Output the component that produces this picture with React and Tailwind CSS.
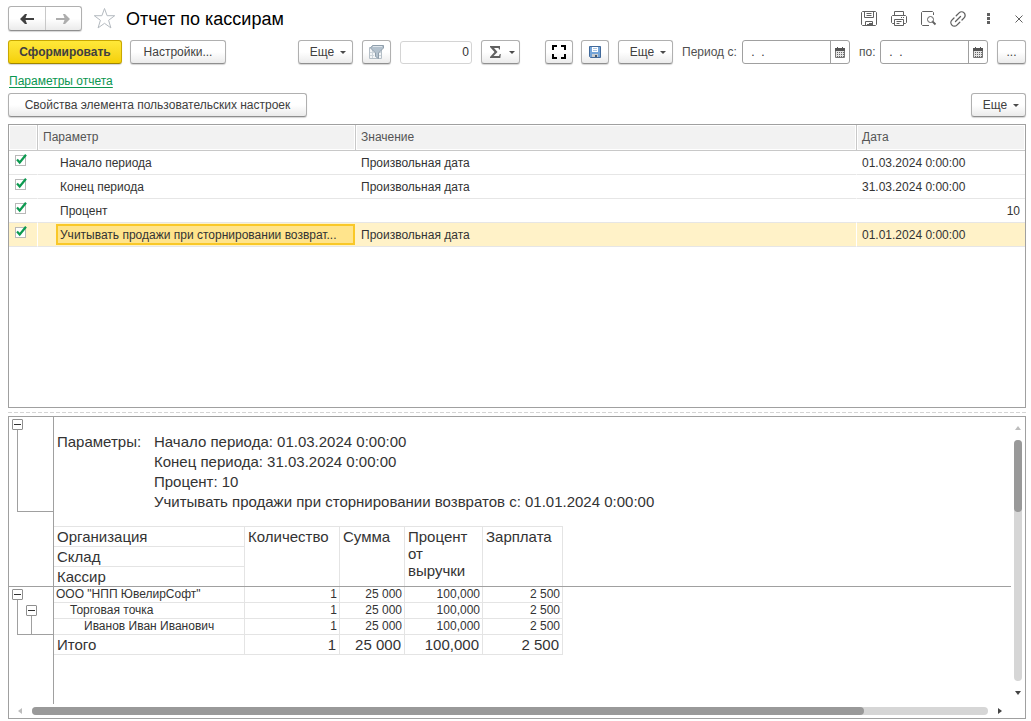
// src/App.jsx
import React from "react";

const parametros = [
  { nombre: "Начало периода", valor: "Произвольная дата", fecha: "01.03.2024 0:00:00" },
  { nombre: "Конец периода", valor: "Произвольная дата", fecha: "31.03.2024 0:00:00" },
  { nombre: "Процент", valor: "", fecha: "10", numero: true },
  {
    nombre: "Учитывать продажи при сторнировании возврат...",
    valor: "Произвольная дата",
    fecha: "01.01.2024 0:00:00",
    activo: true,
  },
];

const resumen = [
  "Начало периода: 01.03.2024 0:00:00",
  "Конец периода: 31.03.2024 0:00:00",
  "Процент: 10",
  "Учитывать продажи при сторнировании возвратов с: 01.01.2024 0:00:00",
];

const filas = [
  { nombre: 'ООО "НПП ЮвелирСофт"', sangria: "pl-[2px]" },
  { nombre: "Торговая точка", sangria: "pl-4" },
  { nombre: "Иванов Иван Иванович", sangria: "pl-[30px]" },
];

const cifras = ["1", "25 000", "100,000", "2 500"];

function Boton({ className = "", children, ...props }) {
  return (
    <button
      type="button"
      className={`flex h-6 shrink-0 items-center justify-center rounded-[3px] border border-[#b0b0b0] border-b-[#8f8f8f] bg-linear-to-b from-white from-50% to-[#ebebeb] whitespace-nowrap text-[#404040] shadow-[0_1px_1px_#d5d5d5] ${className}`}
      {...props}
    >
      {children}
    </button>
  );
}

function Flecha() {
  return (
    <svg width="6" height="3" viewBox="0 0 6 3" className="fill-[#4a4a4a]">
      <path d="M0 0h6L3 3z" />
    </svg>
  );
}

function BotonEsche() {
  return (
    <Boton className="w-[55px] gap-[6px] pl-[5px]">
      Еще <Flecha />
    </Boton>
  );
}

function Fecha({ id }) {
  return (
    <div className="flex h-6 w-[108px] shrink-0 overflow-hidden rounded-[3px] border border-[#a0a0a0] bg-white">
      <input id={id} type="text" defaultValue=" .  ." className="w-[87px] pl-[5px] whitespace-pre text-[#333] outline-none" />
      <button
        type="button"
        aria-label="Выбрать дату"
        className="flex flex-1 items-center justify-center border-l border-[#a0a0a0]"
      >
        <svg width="10" height="11" viewBox="0 0 10 11">
          <path d="M.5 2.500h9v8h-9z" fill="#e4e4e4" stroke="#777" />
          <path d="M0 1h10v3H0zM2 0h1v1H2zM7 0h1v1H7z" fill="#555" />
          <path d="M2 5.500h7M2 7.500h7M2 9.500h7" stroke="#666" strokeDasharray="1 1" />
        </svg>
      </button>
    </div>
  );
}

function Casilla({ etiqueta }) {
  return (
    <label className="relative mb-1 ml-[6px] block h-[11px] w-[11px]">
      <input
        type="checkbox"
        defaultChecked
        aria-label={etiqueta}
        className="block h-[11px] w-[11px] appearance-none border border-[#b8b8b8] bg-white"
      />
      <svg width="12" height="11" viewBox="0 0 12 11" className="pointer-events-none absolute -top-px left-0">
        <path d="M2 5.500l2.700 3L11 .8" fill="none" stroke="#0c9a50" strokeWidth="2.200" />
      </svg>
    </label>
  );
}

function Plegar() {
  return (
    <button
      type="button"
      aria-label="Свернуть группу"
      className="flex h-[11px] w-[11px] items-center justify-center rounded-[1px] border border-[#8f8f8f] bg-white"
    >
      <span className="h-px w-[7px] bg-[#333]" />
    </button>
  );
}

function Columnas() {
  return (
    <colgroup>
      <col className="w-[191px]" />
      <col className="w-[95px]" />
      <col className="w-[65px]" />
      <col className="w-[78px]" />
      <col className="w-20" />
    </colgroup>
  );
}

function Cabecera() {
  return (
    <header className="flex h-[25px] items-center">
      <div className="flex h-[25px] w-[74px] rounded-[3px] border border-[#b0b0b0] border-b-[#8f8f8f] bg-linear-to-b from-white from-50% to-[#ebebeb] shadow-[0_1px_1px_#d5d5d5]">
        <button type="button" aria-label="Назад" className="flex flex-1 items-center justify-center border-r border-[#c8c8c8]">
          <svg width="14" height="10" viewBox="0 0 14 10" className="fill-[#404040]">
            <path d="M0 5L5 0h2L5.500 4H14v2H5.500L7 10H5z" />
          </svg>
        </button>
        <button type="button" aria-label="Вперед" className="flex flex-1 items-center justify-center">
          <svg width="14" height="10" viewBox="0 0 14 10" className="fill-[#adadad]">
            <path d="M14 5L9 0H7l1.500 4H0v2h8.500L7 10h2z" />
          </svg>
        </button>
      </div>
      <button type="button" aria-label="В избранное" className="ml-[11px]">
        <svg width="23" height="23" viewBox="0 0 23 23" fill="none" stroke="#b4bac0">
          <path d="M11.500 1.500l2.600 7.200h7.600l-6.100 4.600 2.300 7.600-6.400-4.600-6.400 4.600 2.300-7.600-6.100-4.600h7.600z" />
        </svg>
      </button>
      <h1 className="ml-[10px] text-[18px] leading-6 text-black">Отчет по кассирам</h1>

      <div className="mr-[3px] ml-auto flex items-center text-[#606060]">
        <button type="button" aria-label="Сохранить" className="mr-[14px]">
          <svg width="16" height="16" viewBox="0 0 16 16" fill="none" stroke="currentColor">
            <path d="M1.500.5h13l1 1v12l-1 1h-13l-1-1v-12zM3.500.5v6h9v-6M5.500 2.500h5M5.500 4.500h5M4.500 14v-3.500h7V14" />
            <path d="M8 12h3v2H6v-1h2z" fill="currentColor" stroke="none" />
          </svg>
        </button>
        <button type="button" aria-label="Печать" className="mr-[14px]">
          <svg width="16" height="16" viewBox="0 0 16 16" fill="none" stroke="currentColor">
            <path d="M3.500 4.500v-4h9v4M3.500 12.500h-2l-1-1v-6l1-1h13l1 1v6l-1 1h-2M3.500 8.500h9v6h-9zM5.500 10.500h5M5.500 12.500h3M10 6.500h1M12 6.500h1" />
          </svg>
        </button>
        <button type="button" aria-label="Просмотр" className="mr-[13px]">
          <svg width="16" height="16" viewBox="0 0 16 16" fill="none" stroke="currentColor">
            <path d="M8 14.500H1.500l-1-1v-12l1-1h10l1 1V4" />
            <circle cx="9.500" cy="8.500" r="3" />
            <path d="M11.500 10.500l3 3" strokeWidth="1.800" />
          </svg>
        </button>
        <button type="button" aria-label="Ссылка" className="mr-[21px]">
          <svg width="16" height="16" viewBox="0 0 16 16" fill="none" stroke="currentColor" strokeWidth="1.300" strokeLinecap="round">
            <path d="M6.200 4.800l2.900-2.900a3.500 3.500 0 0 1 5 5L12 9" />
            <path d="M9.800 11.200l-2.900 2.900a3.500 3.500 0 0 1-5-5L4 7" />
            <path d="M5.500 10.500l5-5" />
          </svg>
        </button>
        <button type="button" aria-label="Меню" className="mr-[25px]">
          <svg width="3" height="11" viewBox="0 0 3 11" fill="currentColor">
            <path d="M0 0h3v3H0zM0 4h3v3H0zM0 8h3v3H0z" />
          </svg>
        </button>
        <button type="button" aria-label="Закрыть">
          <svg width="8" height="8" viewBox="0 0 8 8" fill="none" stroke="currentColor">
            <path d="M.5.500l7 7M7.500.500l-7 7" />
          </svg>
        </button>
      </div>
    </header>
  );
}

function Herramientas() {
  return (
    <div className="mt-[9px] flex items-center">
      <button
        type="button"
        className="h-6 w-[114px] rounded-[3px] border border-[#c9a800] border-b-[#a08600] bg-linear-to-b from-[#ffe838] to-[#f5d000] font-bold text-[#404040] shadow-[0_1px_1px_#d5d5d5]"
      >
        Сформировать
      </button>
      <Boton className="ml-2 w-24">Настройки...</Boton>

      <div className="ml-auto flex items-center gap-[9px]">
        <BotonEsche />
        <Boton className="w-[29px]" aria-label="Фильтр">
          <svg width="15" height="14" viewBox="0 0 15 14">
            <path d="M.5 2.500h12v11H.500z" fill="#f3f5f7" stroke="#b4bec6" />
            <path d="M3.500 5v8M1 7.500h4M1 10.500h4M9 7.500h3M9 10.500h3" stroke="#cdd5db" />
            <path d="M1.500 3L3.500.5h11V3L9.500 8v5.500l-3-2V8z" fill="#b3c1cd" stroke="#8f9eab" />
            <path d="M4 1.500h9" stroke="#dfe6ec" />
          </svg>
        </Boton>
        <input
          type="text"
          aria-label="Сумма выделенных ячеек"
          defaultValue="0"
          className="h-[23px] w-[72px] rounded-[3px] border border-[#d4d4d4] pr-[2px] text-right text-[#333] outline-none"
        />
        <Boton className="w-[39px] gap-2 pl-1" aria-label="Итоги">
          <svg width="11" height="12" viewBox="0 0 11 12" className="fill-[#606060]">
            <path d="M0 0h10v3.500H9L8.500 2H4l3.500 4L3.500 10H9l.8-2h1l-.5 4H0v-1l4.500-5L0 1z" />
          </svg>
          <Flecha />
        </Boton>
      </div>

      <div className="ml-[25px] flex items-center">
        <Boton className="w-7" aria-label="Развернуть">
          <svg width="14" height="14" viewBox="0 0 14 14" fill="none" stroke="#000" strokeWidth="2">
            <path d="M1 5V1h4M9 1h4v4M13 9v4H9M5 13H1V9" />
          </svg>
        </Boton>
        <Boton className="ml-2 w-7" aria-label="Сохранить вариант">
          <svg width="12" height="12" viewBox="0 0 12 12">
            <path d="M.5.5h11v11h-10l-1-1z" fill="#74a4d8" stroke="#41699a" />
            <path d="M3 1h6v5H3z" fill="#fff" />
            <path d="M4 2.500h4M4 4.500h4" stroke="#a9c3e0" />
            <path d="M3 8h6v3H3z" fill="#c8ccd0" />
            <path d="M6 9h2v2H6z" fill="#44586c" />
          </svg>
        </Boton>
        <div className="ml-[9px]">
          <BotonEsche />
        </div>
      </div>

      <label htmlFor="desde" className="ml-[9px] w-[60px] whitespace-nowrap text-[#505050]">
        Период с:
      </label>
      <Fecha id="desde" />
      <label htmlFor="hasta" className="ml-[9px] w-[21px] whitespace-nowrap text-[#505050]">
        по:
      </label>
      <Fecha id="hasta" />
      <Boton className="ml-[9px] w-[29px]">...</Boton>
    </div>
  );
}

function TablaParametros() {
  return (
    <section className="min-h-[124px] flex-[284_1_0%] overflow-hidden border border-[#a0a0a0]">
      <table className="w-full table-fixed border-separate border-spacing-0 text-[#333]">
        <colgroup>
          <col className="w-[29px]" />
          <col className="w-[318px]" />
          <col />
          <col className="w-[168px]" />
        </colgroup>
        <thead>
          <tr className="bg-[#f2f2f2] text-left text-[#555]">
            <th
              className="h-[26px] border-r border-b border-[#c8c8c8] shadow-[inset_0_0_0_1px_#fff]"
              aria-label="Использование"
            />
            <th className="border-r border-b border-[#c8c8c8] pb-[2px] pl-[5px] font-normal shadow-[inset_0_0_0_1px_#fff]">
              Параметр
            </th>
            <th className="border-r border-b border-[#c8c8c8] pb-[2px] pl-[5px] font-normal shadow-[inset_0_0_0_1px_#fff]">
              Значение
            </th>
            <th className="border-b border-[#c8c8c8] pb-[2px] pl-[5px] font-normal shadow-[inset_0_0_0_1px_#fff]">
              Дата
            </th>
          </tr>
        </thead>
        <tbody>
          {parametros.map((p) => (
            <tr key={p.nombre} className={p.activo ? "bg-[#fff2c8]" : ""}>
              <td className="h-6 border-r border-b border-r-white border-b-[#e6e6e6]">
                <Casilla etiqueta={p.nombre} />
              </td>
              <td className="border-b border-[#e6e6e6] pr-px pl-[18px]">
                <div
                  className={`h-[21px] truncate border-2 px-[2px] pt-px leading-4 ${
                    p.activo ? "border-[#f9c828] bg-[#ffe48c]" : "border-transparent"
                  }`}
                >
                  {p.nombre}
                </div>
              </td>
              <td className="border-r border-b border-r-white border-b-[#e6e6e6] pl-[5px]">{p.valor}</td>
              <td className={`border-b border-[#e6e6e6] ${p.numero ? "pr-[5px] text-right" : "pl-[5px]"}`}>
                {p.fecha}
              </td>
            </tr>
          ))}
        </tbody>
      </table>
    </section>
  );
}

function Informe() {
  return (
    <section className="flex min-h-[280px] flex-[303_1_0%] flex-col overflow-hidden border border-[#a0a0a0]">
      <div className="flex flex-1">
        <div className="flex min-w-0 flex-1 flex-col text-[#333]">
          {/* Parte fija */}
          <div className="flex border-b border-[#a0a0a0]">
            <div className="w-[45px] shrink-0 border-r border-[#a0a0a0] pt-[2px]">
              <div className="ml-[3px]">
                <Plegar />
              </div>
              <div className="ml-2 h-[82px] border-b border-l border-[#a0a0a0]" />
            </div>
            <div className="min-w-0 flex-1 pt-[15px] text-[15px] leading-5">
              <dl className="flex pl-[3px]">
                <dt className="w-[97px]">Параметры:</dt>
                <dd>
                  {resumen.map((linea) => (
                    <p key={linea} className="whitespace-nowrap">
                      {linea}
                    </p>
                  ))}
                </dd>
              </dl>
              <table className="mt-[14px] w-[509px] table-fixed border-separate border-spacing-0 border-t border-[#e4e4e4] text-left leading-[19px]">
                <Columnas />
                <thead className="align-top">
                  <tr>
                    <th className="border-r border-b border-[#e4e4e4] pl-[3px] font-normal">Организация</th>
                    {["Количество", "Сумма", "Процент от выручки", "Зарплата"].map((titulo) => (
                      <th
                        key={titulo}
                        rowSpan={3}
                        className="border-r border-[#e4e4e4] pt-px pl-[3px] leading-[17px] font-normal"
                      >
                        {titulo}
                      </th>
                    ))}
                  </tr>
                  <tr>
                    <th className="border-r border-b border-[#e4e4e4] pl-[3px] font-normal">Склад</th>
                  </tr>
                  <tr>
                    <th className="border-r border-[#e4e4e4] pl-[3px] font-normal">Кассир</th>
                  </tr>
                </thead>
              </table>
            </div>
          </div>

          {/* Datos */}
          <div className="flex flex-1">
            <div className="w-[45px] shrink-0 border-r border-[#a0a0a0] pt-[2px]">
              <div className="ml-[3px]">
                <Plegar />
              </div>
              <div className="ml-2 flex h-[35px] flex-col border-b border-l border-[#a0a0a0] pt-[5px]">
                <div className="ml-2">
                  <Plegar />
                </div>
                <div className="ml-[13px] flex-1 border-l border-[#a0a0a0]" />
              </div>
            </div>
            <div>
              <table className="w-[509px] table-fixed border-separate border-spacing-0">
                <Columnas />
                <tbody className="leading-[15px]">
                  {filas.map((fila) => (
                    <tr key={fila.nombre}>
                      <td className={`border-r border-b border-[#e4e4e4] whitespace-nowrap ${fila.sangria}`}>
                        {fila.nombre}
                      </td>
                      {cifras.map((cifra) => (
                        <td key={cifra} className="border-r border-b border-[#e4e4e4] pr-[2px] text-right">
                          {cifra}
                        </td>
                      ))}
                    </tr>
                  ))}
                </tbody>
                <tfoot className="text-[15px] leading-[19px]">
                  <tr>
                    <td className="border-r border-b border-[#e4e4e4] pl-[3px]">Итого</td>
                    {cifras.map((cifra) => (
                      <td key={cifra} className="border-r border-b border-[#e4e4e4] pr-[3px] text-right">
                        {cifra}
                      </td>
                    ))}
                  </tr>
                </tfoot>
              </table>
            </div>
          </div>
        </div>

        {/* Desplazamiento vertical */}
        <div className="flex w-[14px] flex-col items-center pt-[9px] pb-[9px]">
          <button type="button" aria-label="Вверх">
            <svg width="6" height="4" viewBox="0 0 6 4" className="block fill-[#bdbdbd]">
              <path d="M0 4h6L3 0z" />
            </svg>
          </button>
          <div className="mt-[10px] mb-[10px] w-2 flex-1 rounded-full bg-[#d6d6d6]">
            <div className="h-[30%] rounded-full bg-[#999]" />
          </div>
          <button type="button" aria-label="Вниз">
            <svg width="6" height="4" viewBox="0 0 6 4" className="block fill-[#444]">
              <path d="M0 0h6L3 4z" />
            </svg>
          </button>
        </div>
      </div>

      {/* Desplazamiento horizontal */}
      <div className="flex h-[14px] items-center pr-[23px] pl-[9px]">
        <button type="button" aria-label="Влево">
          <svg width="4" height="6" viewBox="0 0 4 6" className="block fill-[#bdbdbd]">
            <path d="M4 0v6L0 3z" />
          </svg>
        </button>
        <div className="mr-[10px] ml-[10px] h-2 flex-1 rounded-full bg-[#d6d6d6]">
          <div className="h-2 w-[87%] rounded-full bg-[#999]" />
        </div>
        <button type="button" aria-label="Вправо">
          <svg width="4" height="6" viewBox="0 0 4 6" className="block fill-[#444]">
            <path d="M0 0v6l4-3z" />
          </svg>
        </button>
      </div>
    </section>
  );
}

export default function App() {
  return (
    <main className="flex h-screen flex-col bg-white pt-[6px] pr-[5px] pb-[2px] pl-2 font-['Liberation_Sans',Arial,sans-serif] text-[12px] leading-4">
      <Cabecera />
      <Herramientas />
      <a href="#parametros" className="mt-[9px] ml-px self-start text-[#0a9650] underline underline-offset-2">
        Параметры отчета
      </a>
      <div className="mt-1 mb-[7px] flex justify-between">
        <Boton className="w-[299px]">Свойства элемента пользовательских настроек</Boton>
        <BotonEsche />
      </div>
      <TablaParametros />
      <div className="mt-1 mb-[3px] h-px shrink-0 bg-[repeating-linear-gradient(90deg,#d4d4d4_0_4px,transparent_4px_6px)]" />
      <Informe />
    </main>
  );
}
